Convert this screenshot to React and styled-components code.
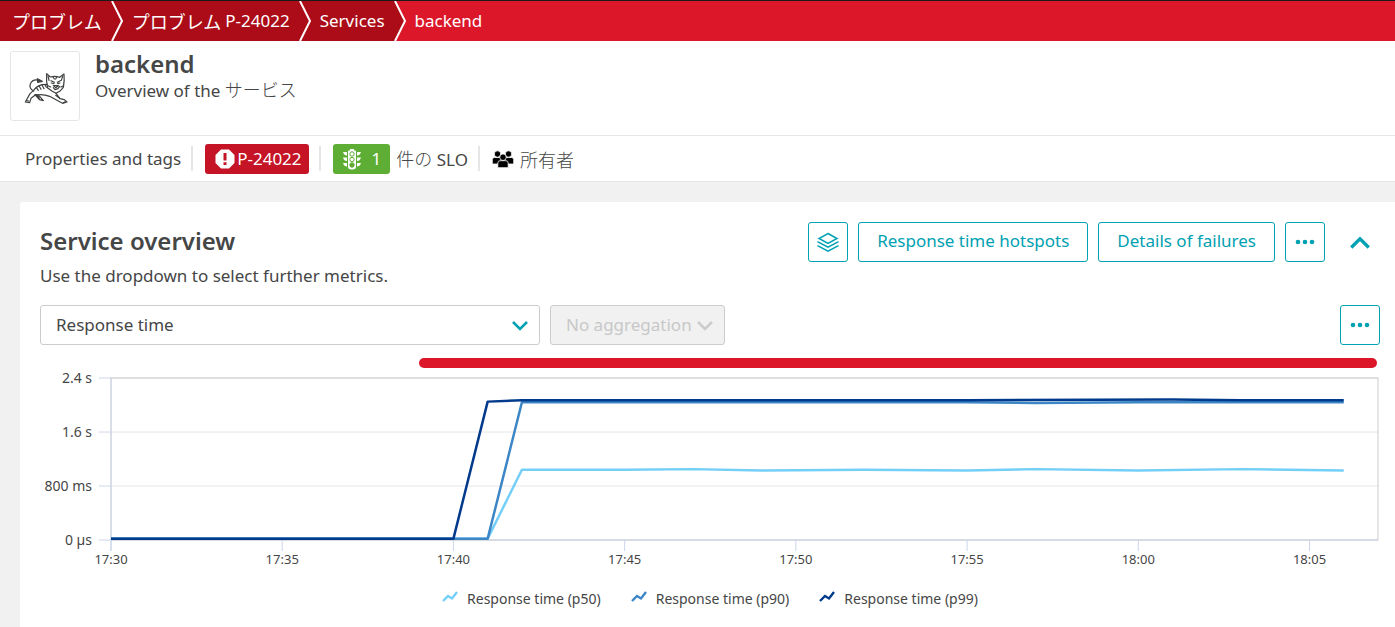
import React from "react";
import styled, { createGlobalStyle } from "styled-components";

const GlobalStyle = createGlobalStyle`
  * { box-sizing: border-box; }
  body {
    margin: 0;
    background: #f1f1f1;
    color: #454646;
    font: 17px/24px "Noto Sans", "Noto Sans CJK JP", sans-serif;
  }
  button, select { font: inherit; }
`;

const Ja = styled.span`
  font-family: "Noto Sans CJK JP", sans-serif;
  font-size: 18px;
  font-weight: 300;
`;

const Breadcrumbs = styled.nav`
  display: flex;
  height: 41px;
  border-top: 1px solid #1a1a1a;
  background: #dc172a;
`;

const Crumb = styled.a`
  display: flex;
  align-items: center;
  gap: 4px;
  padding-left: ${(p) => (p.$first ? 12 : 8)}px;
  padding-right: ${(p) => (p.$current ? 0 : 9)}px;
  background: ${(p) => (p.$current ? "#dc172a" : "#ab0c17")};
  color: #fff;
  text-decoration: none;
  white-space: nowrap;
  ${Ja} { font-weight: 400; }
`;

const Arrow = styled.svg`
  display: block;
  flex: none;
  width: 13px;
  height: 40px;
`;

const EntityHeader = styled.header`
  display: flex;
  gap: 15px;
  padding: 10px 10px 14px;
  background: #fff;
  border-bottom: 1px solid #e6e6e6;
`;

const LogoBox = styled.div`
  display: grid;
  place-items: center;
  width: 70px;
  height: 70px;
  padding: 4px 0 0 3px;
  border: 1px solid #e6e6e6;
  border-radius: 3px;
`;

const Title = styled.h1`
  margin: 0;
  font-size: 24px;
  line-height: 26px;
  font-weight: 600;
`;

const Subtitle = styled.p`
  margin: 0;
`;

const TagBar = styled.div`
  display: flex;
  align-items: center;
  height: 46px;
  padding-left: 25px;
  background: #fff;
  border-bottom: 1px solid #e6e6e6;
  white-space: nowrap;
`;

const TagLink = styled.a`
  display: flex;
  align-items: center;
  gap: 6px;
  color: inherit;
  text-decoration: none;
`;

const Divider = styled.span`
  width: 2px;
  height: 25px;
  margin: 0 12px 0 10px;
  background: #e6e6e6;
`;

const Badge = styled.span`
  display: flex;
  align-items: center;
  gap: ${(p) => (p.$ok ? 11 : 2)}px;
  height: 30px;
  padding: 0 ${(p) => (p.$ok ? 9 : 7)}px 0 10px;
  border-radius: 3px;
  background: ${(p) => (p.$ok ? "#5ead35" : "#c41425")};
  color: #fff;
`;

const Card = styled.main`
  margin: 20px 0 0 20px;
  padding: 20px 15px 20px 20px;
  background: #fff;
  border-radius: 3px 0 0 0;
`;

const CardHead = styled.div`
  display: flex;
  justify-content: space-between;
  align-items: flex-start;
  height: 83px;
`;

const CardTitle = styled.h2`
  margin: 0 0 4px;
  font-size: 24px;
  line-height: 38px;
  font-weight: 600;
`;

const Actions = styled.div`
  display: flex;
  gap: 10px;
`;

const Button = styled.button`
  display: grid;
  place-items: center;
  height: 40px;
  min-width: 40px;
  padding: ${(p) => (p.$icon ? "0" : "0 18px 2px")};
  border: 1px solid ${(p) => (p.$bare ? "transparent" : "#00a1b2")};
  border-radius: 3px;
  background: #fff;
  color: #00a1b2;
  cursor: pointer;
  ${(p) => p.$bare && "margin-left: 5px;"}
`;

const Controls = styled.div`
  display: flex;
  gap: 10px;
  > :last-child { margin-left: auto; }
`;

const SelectBox = styled.div`
  position: relative;
  width: ${(p) => p.$width}px;
  color: ${(p) => (p.$disabled ? "#ccc" : "#00a1b2")};
  svg {
    position: absolute;
    right: 12px;
    top: 15px;
    pointer-events: none;
  }
`;

const Select = styled.select`
  appearance: none;
  width: 100%;
  height: 40px;
  padding: 0 30px 1px 15px;
  border: 1px solid #ccc;
  border-radius: 3px;
  background: #fff;
  color: #454646;
  &:disabled {
    background: #f1f1f1;
    color: #c8c8c8;
    opacity: 1;
  }
`;

const ChartArea = styled.section`
  display: grid;
  grid-template-columns: 71px 1fr;
  padding: 13px 2px 0 0;
`;

const ProblemBar = styled.div`
  grid-column: 2;
  height: 10px;
  margin: 0 1px 9px 24.3%;
  border-radius: 5px;
  background: #dc172a;
`;

const YAxis = styled.div`
  display: flex;
  flex-direction: column;
  justify-content: space-between;
  height: 182px;
  margin-top: -9px;
  padding-right: 19px;
  text-align: right;
  font-size: 14px;
  line-height: 20px;
`;

const Plot = styled.svg`
  display: block;
  width: 100%;
  height: 196px;
  overflow: visible;
  font-size: 13px;
  fill: #454646;
`;

const Legend = styled.ul`
  display: flex;
  justify-content: center;
  gap: 30px;
  margin: 0;
  padding: 16px 0 0;
  list-style: none;
  font-size: 14px;
  line-height: 20px;
`;

const LegendItem = styled.li`
  display: flex;
  gap: 9px;
`;

const SERIES = [
  {
    name: "p50",
    color: "#74cff7",
    points: "0,0.02 11,0.02 12,1.04 15,1.04 17,1.05 19,1.03 22,1.04 25,1.03 27,1.05 30,1.03 33,1.05 36,1.03",
  },
  {
    name: "p90",
    color: "#3d86c6",
    points: "0,0.02 11,0.02 12,2.04 15,2.04 19,2.04 25,2.04 27,2.03 30,2.04 36,2.04",
  },
  {
    name: "p99",
    color: "#003a8c",
    points: "0,0.02 10,0.02 11,2.05 12,2.07 15,2.07 19,2.07 25,2.07 31,2.08 33,2.07 36,2.07",
  },
];

const X_LABELS = ["17:30", "17:35", "17:40", "17:45", "17:50", "17:55", "18:00", "18:05"];
const Y_LABELS = ["2.4 s", "1.6 s", "800 ms", "0 µs"];

const BreadcrumbArrow = ({ last }) => (
  <Arrow viewBox="0 0 13 40" aria-hidden="true">
    <rect width="13" height="40" fill={last ? "#dc172a" : "#ab0c17"} />
    <path d="M0 0H1L11.500 20L1 40H0Z" fill="#ab0c17" />
    <path d="M1 0L11 20L1 40" fill="none" stroke="#fff" strokeWidth="2" />
  </Arrow>
);

const Chevron = ({ up, size = 16 }) => (
  <svg width={size} height={size * 0.75} viewBox="0 0 16 12" aria-hidden="true">
    <path d={up ? "M1 10L8 3L15 10" : "M1 2L8 9L15 2"} fill="none" stroke="currentColor" strokeWidth="2.600" />
  </svg>
);

const Dots = () => (
  <svg width="20" height="6" viewBox="0 0 20 6" fill="currentColor" aria-hidden="true">
    <circle cx="3" cy="3" r="2.300" />
    <circle cx="10" cy="3" r="2.300" />
    <circle cx="17" cy="3" r="2.300" />
  </svg>
);

const Layers = () => (
  <svg width="24" height="22" viewBox="0 0 24 22" fill="none" stroke="currentColor" strokeWidth="1.500" aria-hidden="true">
    <path d="M12 2.500L21 7.500L12 12.500L3 7.500Z" />
    <path d="M1.500 10.700L12 16.200L22.500 10.700M1.500 14.700L12 20.200L22.500 14.700" />
  </svg>
);

const ProblemIcon = () => (
  <svg width="20" height="20" viewBox="0 0 20 20" aria-hidden="true">
    <path d="M6 .5H14L19.500 6V14L14 19.500H6L.5 14V6Z" fill="#fff" />
    <path d="M8.500 4H11.500V11.500H8.500ZM8.500 13.200H11.500V16H8.500Z" fill="#c41425" />
  </svg>
);

const TrafficLight = () => (
  <svg width="18" height="22" viewBox="0 0 18 22" aria-hidden="true">
    <path d="M0 4H4V7.500Q1 7.500 0 4ZM0 9.500H4V13Q1 13 0 9.500ZM0 15H4V18.500Q1 18.500 0 15ZM18 4H14V7.500Q17 7.500 18 4ZM18 9.500H14V13Q17 13 18 9.500ZM18 15H14V18.500Q17 18.500 18 15Z" fill="#fff" />
    <path d="M5 2.500H7V1H11V2.500H13V19Q13 21.500 9 21.500Q5 21.500 5 19Z" fill="#fff" />
    <g fill="none" stroke="#5ead35" strokeWidth="1">
      <circle cx="9" cy="6" r="2.200" />
      <circle cx="9" cy="11.500" r="2.200" />
      <circle cx="9" cy="17" r="2.200" fill="#5ead35" />
    </g>
  </svg>
);

const Owners = () => (
  <svg width="22" height="18" viewBox="0 0 22 18" aria-hidden="true">
    <g stroke="#fff" strokeWidth=".8">
      <circle cx="5.500" cy="4" r="3.200" />
      <path d="M.3 14V9.500Q.3 7.500 2.500 7.500H8.500Q10 7.500 10 9.500V14Z" />
      <circle cx="16.500" cy="4" r="3.200" />
      <path d="M12 14V9.500Q12 7.500 14 7.500H19.500Q21.700 7.500 21.700 9.500V14Z" />
      <circle cx="11" cy="7.200" r="3.300" />
      <path d="M5.800 17.700V13Q5.800 10.700 8 10.700H14Q16.200 10.700 16.200 13V17.700Z" />
    </g>
  </svg>
);

const TigerLogo = () => (
  <svg width="46" height="36" viewBox="58 72 138 108" fill="none" stroke="#3f4142" strokeWidth="3.600" strokeLinecap="round" strokeLinejoin="round" aria-label="Service technology">
    <path d="M126 83L137 93Q151 89 165 94L178 84Q180 103 176 124L165 136L154 142L143 136L129 126Q124 105 126 83Z" />
    <path d="M130 90L133 103M174 91L170 103M145 93L149 99M156 93L153 99M139 104L149 109M167 104L158 109M140 111L148 113M166 111L159 113M146 119H161L153 125ZM146 125L151 131L160 128L165 121M130 119L138 123M177 119L169 123" />
    <path d="M128 115L112 116Q95 121 87 133L76 143L62 168L75 170L79 157L92 147Q115 143 135 151L165 167L174 172L187 168L179 161L166 158L154 142" />
    <path d="M87 135Q72 127 77 114Q84 98 103 103" />
    <path d="M98 98L113 106L99 109Z" fill="#3f4142" />
    <path d="M103 119L109 130M112 117L118 128M121 116L125 124M95 125L101 133M91 146L104 161L116 164L103 149M66 164L72 165M153 148L165 157M181 167L176 170" />
    <path d="M92 146L104 158L100 147Z" fill="#3f4142" />
  </svg>
);

function Chart() {
  return (
    <ChartArea aria-label="Response time chart">
      <ProblemBar />
      <YAxis>
        {Y_LABELS.map((label) => (
          <span key={label}>{label}</span>
        ))}
      </YAxis>
      <Plot>
        {[0, 54, 108, 162].map((y) => (
          <g key={y}>
            <line x1="-12" x2="0" y1={y + 1} y2={y + 1} stroke="#ccd6eb" />
            <line x1="0" x2="100%" y1={y + 1} y2={y + 1} stroke="#e6e6e6" strokeWidth="1" />
          </g>
        ))}
        <rect x="0" y="1" width="100%" height="162" fill="none" stroke="#ccc" />
        <line x1="0" x2="100%" y1="163" y2="163" stroke="#ccd6eb" />
        <line x1="0" x2="0" y1="1" y2="174" stroke="#ccd6eb" />
        {X_LABELS.map((label, i) => {
          const x = `${(i * 500) / 37}%`;
          return (
            <g key={label}>
              <line x1={x} x2={x} y1="163" y2="174" stroke="#ccd6eb" />
              <text x={x} y="187" textAnchor="middle">{label}</text>
            </g>
          );
        })}
        <svg y="1" width="100%" height="162" viewBox="0 0 37 2.4" preserveAspectRatio="none" overflow="visible">
          <g transform="matrix(1 0 0 -1 0 2.4)">
            {SERIES.map((s) => (
              <polyline key={s.name} points={s.points} fill="none" stroke={s.color} strokeWidth="2.500" strokeLinejoin="round" vectorEffect="non-scaling-stroke" />
            ))}
          </g>
        </svg>
      </Plot>
    </ChartArea>
  );
}

export default function App() {
  return (
    <>
      <GlobalStyle />
      <Breadcrumbs aria-label="Breadcrumb">
        <Crumb href="#problems" $first><Ja>プロブレム</Ja></Crumb>
        <BreadcrumbArrow />
        <Crumb href="#problem"><Ja>プロブレム</Ja>P-24022</Crumb>
        <BreadcrumbArrow />
        <Crumb href="#services">Services</Crumb>
        <BreadcrumbArrow last />
        <Crumb href="#backend" $current aria-current="page">backend</Crumb>
      </Breadcrumbs>
      <EntityHeader>
        <LogoBox><TigerLogo /></LogoBox>
        <div>
          <Title>backend</Title>
          <Subtitle>Overview of the <Ja>サービス</Ja></Subtitle>
        </div>
      </EntityHeader>
      <TagBar>
        <TagLink href="#properties">Properties and tags</TagLink>
        <Divider />
        <TagLink href="#problem"><Badge><ProblemIcon />P-24022</Badge></TagLink>
        <Divider />
        <TagLink href="#slo">
          <Badge $ok><TrafficLight />1</Badge>
          <span><Ja>件の</Ja> SLO</span>
        </TagLink>
        <Divider />
        <TagLink href="#owners"><Owners /><Ja>所有者</Ja></TagLink>
      </TagBar>
      <Card>
        <CardHead>
          <div>
            <CardTitle>Service overview</CardTitle>
            <Subtitle>Use the dropdown to select further metrics.</Subtitle>
          </div>
          <Actions>
            <Button $icon aria-label="Layers"><Layers /></Button>
            <Button>Response time hotspots</Button>
            <Button>Details of failures</Button>
            <Button $icon aria-label="More actions"><Dots /></Button>
            <Button $icon $bare aria-label="Collapse"><Chevron up size={20} /></Button>
          </Actions>
        </CardHead>
        <Controls>
          <SelectBox $width={500}>
            <Select aria-label="Metric"><option>Response time</option></Select>
            <Chevron />
          </SelectBox>
          <SelectBox $width={175} $disabled>
            <Select aria-label="Aggregation" disabled><option>No aggregation</option></Select>
            <Chevron />
          </SelectBox>
          <Button $icon aria-label="Chart options"><Dots /></Button>
        </Controls>
        <Chart />
        <Legend>
          {SERIES.map((s) => (
            <LegendItem key={s.name}>
              <svg width="16" height="16" viewBox="0 0 16 16" aria-hidden="true">
                <path d="M1 12L6 7L10 9.500L15 3" fill="none" stroke={s.color} strokeWidth="2.400" />
              </svg>
              Response time ({s.name})
            </LegendItem>
          ))}
        </Legend>
      </Card>
    </>
  );
}
